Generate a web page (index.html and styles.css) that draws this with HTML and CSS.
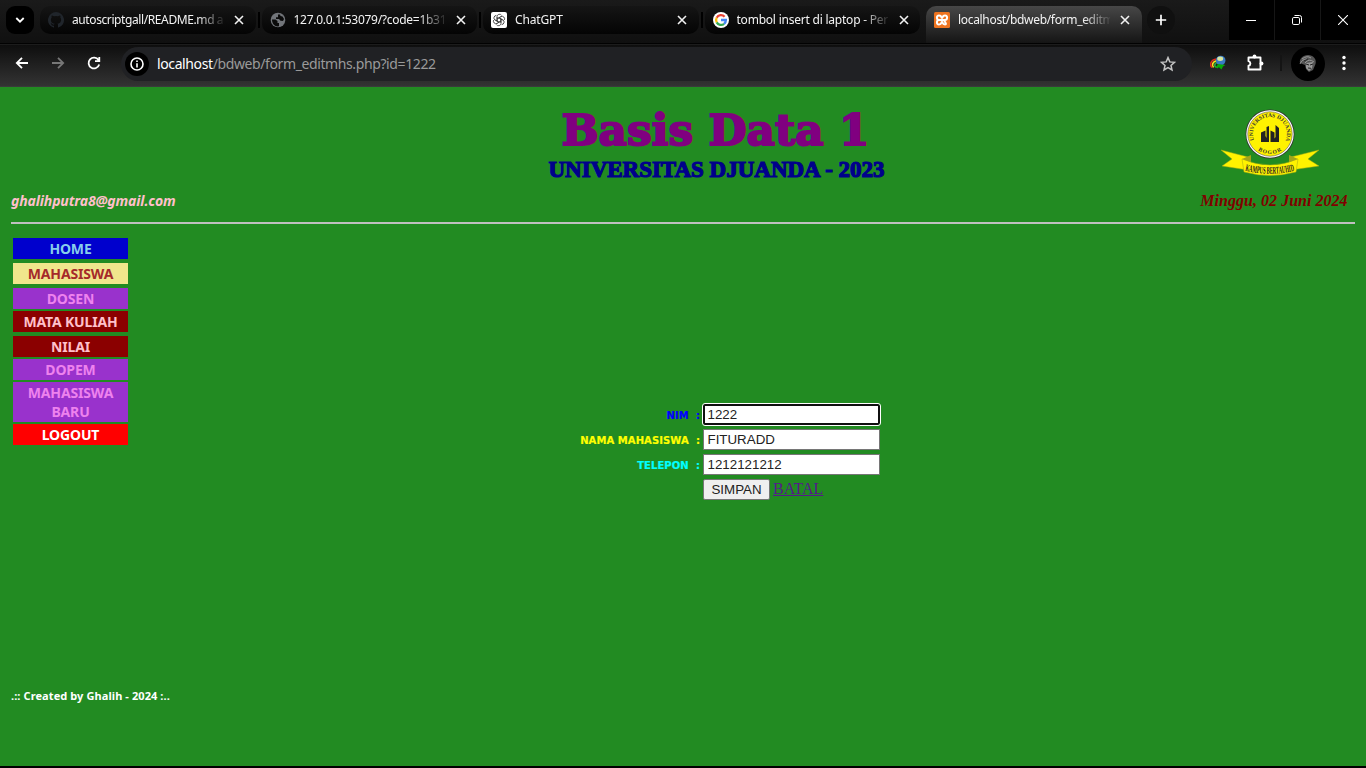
FILE: index.html
```html
<!DOCTYPE html>
<html lang="id">
<head>
<meta charset="utf-8">
<title>localhost/bdweb/form_editmhs.php</title>
<link rel="stylesheet" href="styles.css">
</head>
<body>
<header class="tabstrip">
  <div class="tab-search"><svg width="10" height="8" viewBox="0 0 10 8"><path d="M1.3 2 5 5.700 8.700 2" fill="none" stroke="#fff" stroke-width="1.8"/></svg></div>
  <div class="tabs">
    <div class="tab">
      <svg class="fav" viewBox="0 0 16 16"><path fill="#20252b" d="M8 0a8 8 0 0 0-2.500 15.600c.4.100.5-.2.500-.4v-1.500c-2 .4-2.600-.9-2.700-1.400-.3-.5-.6-.9-.9-1 .9-.5 1.500.2 1.900.8.5.8 1.200.7 1.800.5.1-.5.3-.8.5-1-1.900-.2-3.700-.9-3.700-3.900 0-.9.3-1.600.8-2.200-.1-.5-.4-1.200.1-2.100 0 0 .8-.2 2.200.8a7 7 0 0 1 4 0c1.400-1 2.200-.8 2.200-.8.5.9.200 1.600.1 2.100.5.6.8 1.300.8 2.200 0 3-1.800 3.700-3.700 3.900.3.300.6.800.6 1.500v2.100c0 .2.100.5.500.4A8 8 0 0 0 8 0"/></svg>
      <span class="tab-title t1">autoscriptgall/README.md a</span>
      <svg class="close" viewBox="0 0 10 10"><path d="m1 1 8 8m0-8-8 8"/></svg>
    </div>
    <div class="tab">
      <svg class="fav" viewBox="0 0 16 16"><circle cx="8" cy="8" r="7.300" fill="#72757a"/><path fill="#0b0b0b" d="M2 7.500h3.500l2 1.500v2H9v3.300C5 15 2 12 2 7.500M8 2.500h2l.5 1.500 2 .5L14 7l-1 2-2.500-.3L9 7H6V5.200h2z"/></svg>
      <span class="tab-title t2">127.0.0.1:53079/?code=1b31</span>
      <svg class="close" viewBox="0 0 10 10"><path d="m1 1 8 8m0-8-8 8"/></svg>
    </div>
    <div class="tab">
      <svg class="fav" viewBox="0 0 16 16"><rect width="16" height="16" rx="2" fill="#fff"/><g fill="none" stroke="#333" stroke-width=".8"><path id="petal" d="M6 8.800V4.600a2.500 2.500 0 0 1 4.600-1.200M6.200 6.900 9.600 5"/><use href="#petal" transform="rotate(60 8 8)"/><use href="#petal" transform="rotate(120 8 8)"/><use href="#petal" transform="rotate(180 8 8)"/><use href="#petal" transform="rotate(240 8 8)"/><use href="#petal" transform="rotate(300 8 8)"/></g></svg>
      <span class="tab-title t3">ChatGPT</span>
      <svg class="close" viewBox="0 0 10 10"><path d="m1 1 8 8m0-8-8 8"/></svg>
    </div>
    <div class="tab">
      <svg class="fav" viewBox="0 0 16 16"><circle cx="8" cy="8" r="8" fill="#fff"/><g fill="none" stroke-width="2.300"><path stroke="#ea4335" d="M3.700 5.700A4.900 4.900 0 0 1 11.600 4.700"/><path stroke="#fbbc05" d="M3.700 5.700a4.900 4.900 0 0 0 0 4.700"/><path stroke="#34a853" d="M3.700 10.400a4.900 4.900 0 0 0 7.400 1.400"/><path stroke="#4285f4" d="M8 8h4.900a4.900 4.900 0 0 1-1.800 3.800"/></g></svg>
      <span class="tab-title t4">tombol insert di laptop - Per</span>
      <svg class="close" viewBox="0 0 10 10"><path d="m1 1 8 8m0-8-8 8"/></svg>
    </div>
    <div class="tab active">
      <svg class="fav" viewBox="0 0 16 16"><rect width="16" height="16" rx="1.500" fill="#ee7420"/><path fill="none" stroke="#fff" stroke-width="2" d="M5 8C2.500 8 2 3.500 5 3.500S7 6 8 6s0-2.500 3-2.500S13.500 8 11 8s3 4.500 0 4.500S9 10 8 10s0 2.500-3 2.500S2.500 8 5 8h6"/></svg>
      <span class="tab-title t5">localhost/bdweb/form_editm</span>
      <svg class="close" viewBox="0 0 10 10"><path d="m1 1 8 8m0-8-8 8"/></svg>
    </div>
  </div>
  <div class="new-tab"><svg width="12" height="12" viewBox="0 0 12 12"><path d="M6 .8v10.400M.8 6h10.400" stroke="#fff" stroke-width="1.700"/></svg></div>
  <div class="win">
    <span><svg width="10" height="10"><path d="M0 5.500h10" stroke="#fff"/></svg></span>
    <span><svg width="10" height="10" fill="none" stroke="#fff"><rect x=".5" y="2.500" width="7" height="7" rx="1.300"/><path d="M2.500.5H7.500a2 2 0 0 1 2 2v5"/></svg></span>
    <span><svg width="10" height="10"><path d="m0 0 10 10M10 0 0 10" stroke="#fff" stroke-width="1.100"/></svg></span>
  </div>
</header>
<nav class="toolbar">
  <svg class="nav-icon" viewBox="0 0 16 16"><path d="M14 8H3m5-5.200L2.800 8 8 13.200"/></svg>
  <svg class="nav-icon dim" viewBox="0 0 16 16"><path d="M2 8h11M8 2.800 13.200 8 8 13.200"/></svg>
  <svg class="nav-icon" viewBox="0 0 16 16"><path d="M13.200 9.500A5.400 5.400 0 1 1 12.500 5M13.300 2v4.200H9"/></svg>
  <div class="omnibox">
    <div class="info"><svg width="14" height="14" viewBox="0 0 14 14"><circle cx="7" cy="7" r="6" fill="none" stroke="#fff" stroke-width="1.600"/><path d="M7 6.200V10.500M7 3.500v1.600" stroke="#fff" stroke-width="1.600"/></svg></div>
    <span class="url"><b>localhost</b>/bdweb/form_editmhs.php?id=1222</span>
    <svg class="star" viewBox="0 0 16 16"><path fill="none" stroke="#c4c4c4" stroke-width="1.500" d="m8 1.600 1.800 4.300 4.700.4L11 9.400l1 4.600-4-2.400L4 14l1-4.600-3.500-3.100 4.700-.4z"/></svg>
  </div>
  <svg class="idm" viewBox="0 0 16 16"><g fill="none" stroke-width="1.600"><path stroke="#e02b20" d="M6.500 4C.5 4.500-.5 10 2 12.500"/><path stroke="#ffe11d" d="M7 5.500C2.500 6.500 1.500 10 3.500 12.500"/><path stroke="#26a641" d="M7.500 7C3.500 9 4 12.500 8 12.500"/></g><circle cx="10.700" cy="5.500" r="4.800" fill="#397bc5"/><ellipse cx="10.200" cy="3.800" rx="3" ry="2.200" fill="#d6e5a0"/><path fill="#08a808" d="m8 9 7.500 1-2.500 1.500-1.500 3-2.200-2-4 .5z"/></svg>
  <svg class="ext" viewBox="0 0 18 18"><path fill="none" stroke="#fff" stroke-width="1.900" stroke-linejoin="round" d="M2.500 3.500h12v12h-12v-3.700c2.500-.5 2.500-4 0-4.600z"/><circle cx="8.500" cy="2.500" r="1.900" fill="#fff"/><circle cx="15.500" cy="9.500" r="1.900" fill="#fff"/></svg>
  <i class="sep"></i>
  <div class="avatar"><svg width="20" height="20" viewBox="0 0 20 20"><path fill="#555" d="M2 9C1 5 5 1 10 1s9 4 7.500 9L15 16l-4 2-3-3-1-4z"/><path fill="#999" d="m8 9 7-1-1 6-3 3-3-3z"/><path fill="none" stroke="#aaa" stroke-width=".8" d="M2 10q2-5 7-5M4 5q5-4 9-1m-6 5q4-5 9-1"/><path stroke="#252525" d="m8 10 3 1m1 0 3-1m-5 4 3 .3M6 7l4-2"/></svg></div>
  <svg class="dots" viewBox="0 0 4 16" fill="#fff"><circle cx="2" cy="2.500" r="1.700"/><circle cx="2" cy="8" r="1.700"/><circle cx="2" cy="13.500" r="1.700"/></svg>
</nav>
<main class="page">
  <section class="banner">
    <div class="email">ghalihputra8@gmail.com</div>
    <svg class="heading" width="340" height="80" viewBox="0 0 340 80">
      <text class="course" x="14.500" y="39" textLength="308" lengthAdjust="spacingAndGlyphs">Basis Data 1</text>
      <text class="campus" x="1.500" y="71" textLength="336" lengthAdjust="spacingAndGlyphs">UNIVERSITAS DJUANDA - 2023</text>
    </svg>
    <div class="campus-date">
      <svg class="crest" width="100" height="70" viewBox="0 0 100 70">
        <path fill="#fff200" stroke="#a5a914" stroke-width=".5" d="m1 42 27 7v13L2 58l10-7zM99 42l-28 7v13l28-4-11-7z"/>
        <path fill="#a3a51b" d="m22 51 9-4v9zM78 51l-9-4v9z"/>
        <circle cx="50" cy="26" r="24.500" fill="#333"/><circle cx="50" cy="26" r="23.700" fill="#fff"/><circle cx="50" cy="26" r="22.200" fill="#fff200" stroke="#555" stroke-width=".6"/>
        <path id="arcTop" d="M34.500 33A17 17 0 1 1 65.500 33" fill="none"/><path id="arcLow" d="M35 39.500A20.500 20.500 0 0 0 65 39.500" fill="none"/>
        <text class="crest-text"><textPath href="#arcTop" startOffset="1" textLength="66" lengthAdjust="spacingAndGlyphs">UNIVERSITAS DJUANDA</textPath></text>
        <text class="crest-text"><textPath href="#arcLow" startOffset="4" textLength="25">BOGOR</textPath></text>
        <path fill="#222" d="M41 24.500l4.500-2v5.500l1 2V19l2.500-1v16h-8zM50.500 22.500l4 2v6l1-1.500V17l3.500 3v14h-8.500z"/>
        <path fill="#fff200" stroke="#a5a914" stroke-width=".5" d="M22 51q28 12 56 0l-2 13q-26 7-52 0z"/>
        <path id="ribbonLine" d="M24 62.500q26 6.500 52 0" fill="none"/>
        <text class="ribbon-text"><textPath href="#ribbonLine" startOffset="1" textLength="50" lengthAdjust="spacingAndGlyphs">KAMPUS BERTAUHID</textPath></text>
      </svg>
      <div class="date">Minggu, 02 Juni 2024</div>
    </div>
  </section>
  <section class="content">
    <nav class="menu">
      <a class="home">HOME</a>
      <a class="khaki">MAHASISWA</a>
      <a class="violet tight">DOSEN</a>
      <a class="maroon">MATA KULIAH</a>
      <a class="maroon tight">NILAI</a>
      <a class="violet tight">DOPEM</a>
      <a class="violet tight">MAHASISWA BARU</a>
      <a class="logout">LOGOUT</a>
    </nav>
    <form class="form">
      <label class="blue">NIM&nbsp; :</label><input class="focused" type="text" value="1222">
      <label class="yellow">NAMA MAHASISWA&nbsp; :</label><input type="text" value="FITURADD">
      <label class="cyan">TELEPON&nbsp; :</label><input type="text" value="1212121212">
      <div class="actions"><button type="button">SIMPAN</button><a>BATAL</a></div>
    </form>
  </section>
  <footer>.:: Created by Ghalih - 2024 :..</footer>
</main>
</body>
</html>
```
FILE: styles.css
```css
* { box-sizing: border-box; }
body { margin: 0; width: 1366px; height: 768px; overflow: hidden; background: #000; font-family: "Noto Sans", sans-serif; display: flex; flex-direction: column; }
svg { display: block; flex: none; }

.tabstrip { height: 44px; flex: none; display: flex; padding: 6px 0 0 6px; background: linear-gradient(#1a1a1a, #101010); border-bottom: 1px solid #020202; }
.tab-search { width: 28px; height: 28px; border-radius: 9px; background: #000; display: grid; place-items: center; margin-right: 6px; }
.tabs { display: flex; gap: 6px; }
.tab { position: relative; width: 215.500px; height: 28px; padding: 0 10px 0 8px; display: flex; align-items: center; border-radius: 10px; background: linear-gradient(#151515, #040404); }
.tab:not(.active):not(:nth-child(4))::after { content: ""; position: absolute; right: -4px; top: 6px; width: 2px; height: 16px; background: #000; }
.tab.active { height: 37px; padding-bottom: 9px; border-radius: 10px 10px 0 0; background: linear-gradient(#474747, #151515); }
.fav { width: 16px; height: 16px; }
.tab-title { width: 152px; margin-left: 8px; font-size: 12px; line-height: 16px; color: #f3f3f3; white-space: nowrap; mask-image: linear-gradient(90deg, #000 125px, transparent 154px); }
.t1 { letter-spacing: -.4px; }
.t2 { letter-spacing: -.28px; }
.t3 { letter-spacing: -.15px; }
.t4 { letter-spacing: -.22px; }
.t5 { letter-spacing: -.32px; }
.close { width: 10px; height: 10px; margin-left: 10.300px; fill: none; stroke: #f2f2f2; stroke-width: 1.600; }
.new-tab { width: 28px; height: 28px; margin-left: 5px; border-radius: 50%; background: #101010; display: grid; place-items: center; }
.win { display: flex; gap: 1px; margin: -6px 0 0 auto; height: 40px; background: #161616; }
.win span { width: 45px; padding-right: 1px; background: #000; display: grid; place-items: center; }

.toolbar { height: 43px; flex: none; display: flex; align-items: center; padding: 0 20px 5px 14px; background: linear-gradient(#0e0e0e, #333); border-top: 1px solid #1c1c1c; border-bottom: 1px solid #3a3a3a; }
.nav-icon { width: 16px; height: 16px; margin-right: 20px; fill: none; stroke: #fff; stroke-width: 1.800; }
.nav-icon.dim { stroke: #777; }
.omnibox { width: 1071px; height: 34px; display: flex; align-items: center; padding: 0 16px 1px 4px; background: #202124; border-radius: 17px; margin: 2px 0 0 -1px; }
.info { width: 24px; height: 24px; border-radius: 50%; background: #000; display: grid; place-items: center; }
.url { margin-left: 8px; flex: 1; font-size: 14px; line-height: 20px; letter-spacing: -.39px; color: #9a9a9a; }
.url b { font-weight: 400; color: #fff; }
.star { width: 16px; height: 16px; }
.idm { width: 16px; height: 16px; margin-left: 18px; }
.ext { width: 18px; height: 18px; margin-left: 20px; }
.sep { width: 2px; height: 16px; margin-left: 16px; background: #141414; }
.avatar { width: 34px; height: 34px; margin: 1px 0 0 9px; border-radius: 50%; background: #000; display: grid; place-items: center; }
.dots { width: 4px; height: 16px; margin-left: auto; }

.page { height: 679px; flex: none; display: flex; flex-direction: column; padding: 0 11px; background: #228b22; }
.banner { height: 137px; flex: none; display: grid; grid-template-columns: 536px 1fr 170px; border-bottom: 2px solid #c0c0c0; }
.email { align-self: end; padding-bottom: 11px; font: italic bold 14px/20px "Noto Sans", sans-serif; letter-spacing: -.13px; color: #ffc0cb; }
.heading { margin-top: 19px; }
.course { font: bold 43px "DejaVu Serif", serif; fill: #800080; stroke: #800080; stroke-width: 2px; }
.campus { font: bold 23px "Liberation Serif", serif; fill: #00008b; stroke: #00008b; stroke-width: 1.200px; }
.campus-date { display: flex; flex-direction: column; align-items: center; padding-top: 21px; }
.crest-text { font: bold 5.500px "Liberation Serif", serif; fill: #333; }
.ribbon-text { font: bold 10px "Liberation Serif", serif; fill: #222; }
.date { margin-top: 13px; margin-right: -8px; font: italic bold 16px/20px "Liberation Serif", serif; letter-spacing: .03px; white-space: nowrap; color: #800000; }
.content { height: 462px; flex: none; display: grid; grid-template-columns: 119px 1fr; }
.menu { padding: 14px 2px 0; display: flex; flex-direction: column; }
.menu a { padding: 1px 0; margin-bottom: 4px; font-size: 14px; font-weight: 700; line-height: 19px; text-align: center; letter-spacing: -.15px; }
.menu a.tight { margin-bottom: 2px; }
.menu .home { background: #0000cd; color: #87ceeb; }
.menu .khaki { background: #f0e68c; color: #a52a2a; }
.menu .violet { background: #9932cc; color: #ee82ee; }
.menu .maroon { background: #8b0000; color: #ffc0cb; }
.menu .logout { background: #f00; color: #fff; }
.form { display: grid; grid-template-columns: 570px 177px; grid-auto-rows: 21px; gap: 4px 3px; padding-top: 180px; }
.form label { text-align: right; font: bold 10px/21px "DejaVu Sans", sans-serif; letter-spacing: .08px; padding-top: 1px; white-space: nowrap; -webkit-text-stroke: .2px; }
.blue { color: #00f; }
.yellow { color: #ff0; }
.cyan { color: #0ff; }
.form input { width: 177px; height: 21px; padding: 1px 2.500px; border: 2px inset #767676; background: #fff; color: #222; font: 13.333px "Liberation Sans", sans-serif; }
.form input:not(.focused) { border: 1px solid #767676; padding: 0 3.500px 1px; }
.form input.focused { border: 2px solid #101010; outline: 1px solid #fff; border-radius: 2px; padding-bottom: 2px; }
.actions { grid-column: 2; display: flex; gap: 3px; }
.actions button { width: 67px; height: 21px; padding: 0; border: 1px solid #767676; border-radius: 2px; background: #efefef; color: #222; font: 13.333px "Liberation Sans", sans-serif; }
.actions a { font: 16px/19px "Liberation Serif", serif; color: #551a8b; text-decoration: underline; }
footer { padding-top: 2px; font-size: 11px; line-height: 16px; font-weight: 700; letter-spacing: .09px; color: #fff; }
```
